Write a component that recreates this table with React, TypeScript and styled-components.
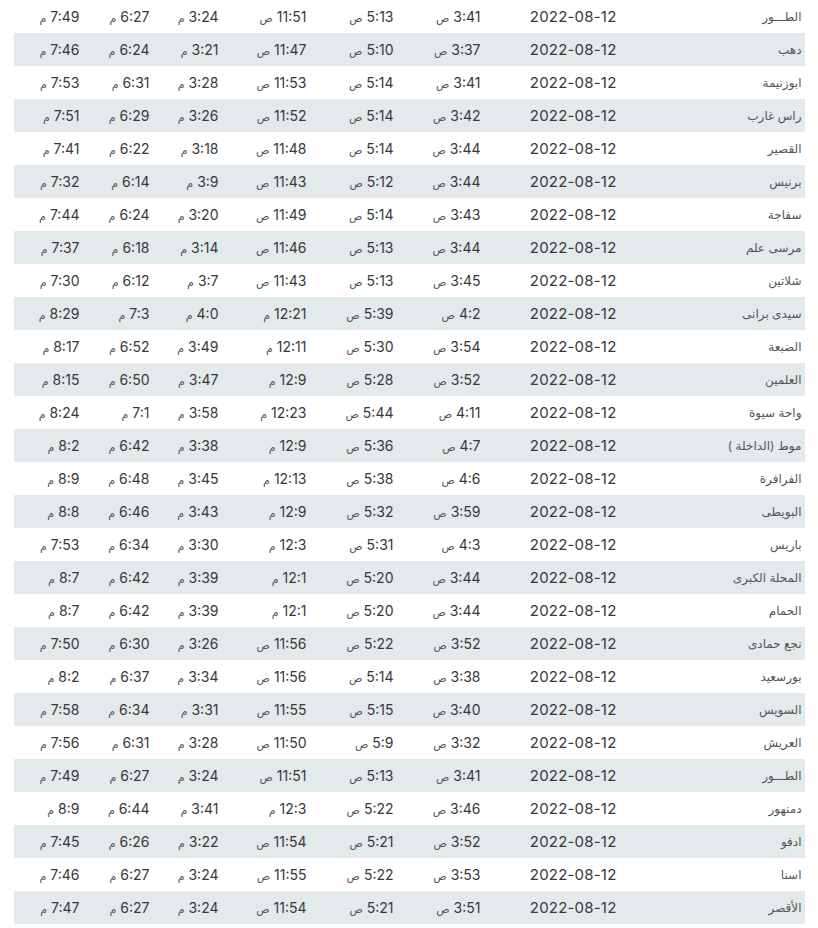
import { createGlobalStyle, styled } from "styled-components";

const GlobalStyle = createGlobalStyle`
  html, body {
    margin: 0;
    padding: 0;
    background: #ffffff;
  }
  body {
    font-family: "Inter", "DejaVu Sans", sans-serif;
    color: #383838;
  }
`;

type Row = [string, string, string, string, string, string, string];

const DATE = "2022-08-12";

const rows: Row[] = [
  ["الطـــور", "3:41 ص", "5:13 ص", "11:51 ص", "3:24 م", "6:27 م", "7:49 م"],
  ["دهب", "3:37 ص", "5:10 ص", "11:47 ص", "3:21 م", "6:24 م", "7:46 م"],
  ["ابوزنيمة", "3:41 ص", "5:14 ص", "11:53 ص", "3:28 م", "6:31 م", "7:53 م"],
  ["راس غارب", "3:42 ص", "5:14 ص", "11:52 ص", "3:26 م", "6:29 م", "7:51 م"],
  ["القصير", "3:44 ص", "5:14 ص", "11:48 ص", "3:18 م", "6:22 م", "7:41 م"],
  ["برنيس", "3:44 ص", "5:12 ص", "11:43 ص", "3:9 م", "6:14 م", "7:32 م"],
  ["سفاجة", "3:43 ص", "5:14 ص", "11:49 ص", "3:20 م", "6:24 م", "7:44 م"],
  ["مرسى علم", "3:44 ص", "5:13 ص", "11:46 ص", "3:14 م", "6:18 م", "7:37 م"],
  ["شلاتين", "3:45 ص", "5:13 ص", "11:43 ص", "3:7 م", "6:12 م", "7:30 م"],
  ["سيدى برانى", "4:2 ص", "5:39 ص", "12:21 م", "4:0 م", "7:3 م", "8:29 م"],
  ["الضبعة", "3:54 ص", "5:30 ص", "12:11 م", "3:49 م", "6:52 م", "8:17 م"],
  ["العلمين", "3:52 ص", "5:28 ص", "12:9 م", "3:47 م", "6:50 م", "8:15 م"],
  ["واحة سيوة", "4:11 ص", "5:44 ص", "12:23 م", "3:58 م", "7:1 م", "8:24 م"],
  ["موط (الداخلة )", "4:7 ص", "5:36 ص", "12:9 م", "3:38 م", "6:42 م", "8:2 م"],
  ["الفرافرة", "4:6 ص", "5:38 ص", "12:13 م", "3:45 م", "6:48 م", "8:9 م"],
  ["البويطى", "3:59 ص", "5:32 ص", "12:9 م", "3:43 م", "6:46 م", "8:8 م"],
  ["باريس", "4:3 ص", "5:31 ص", "12:3 م", "3:30 م", "6:34 م", "7:53 م"],
  ["المحلة الكبرى", "3:44 ص", "5:20 ص", "12:1 م", "3:39 م", "6:42 م", "8:7 م"],
  ["الحمام", "3:44 ص", "5:20 ص", "12:1 م", "3:39 م", "6:42 م", "8:7 م"],
  ["نجع حمادى", "3:52 ص", "5:22 ص", "11:56 ص", "3:26 م", "6:30 م", "7:50 م"],
  ["بورسعيد", "3:38 ص", "5:14 ص", "11:56 ص", "3:34 م", "6:37 م", "8:2 م"],
  ["السويس", "3:40 ص", "5:15 ص", "11:55 ص", "3:31 م", "6:34 م", "7:58 م"],
  ["العريش", "3:32 ص", "5:9 ص", "11:50 ص", "3:28 م", "6:31 م", "7:56 م"],
  ["الطـــور", "3:41 ص", "5:13 ص", "11:51 ص", "3:24 م", "6:27 م", "7:49 م"],
  ["دمنهور", "3:46 ص", "5:22 ص", "12:3 م", "3:41 م", "6:44 م", "8:9 م"],
  ["ادفو", "3:52 ص", "5:21 ص", "11:54 ص", "3:22 م", "6:26 م", "7:45 م"],
  ["اسنا", "3:53 ص", "5:22 ص", "11:55 ص", "3:24 م", "6:27 م", "7:46 م"],
  ["الأقصر", "3:51 ص", "5:21 ص", "11:54 ص", "3:24 م", "6:27 م", "7:47 م"],
];

// column widths, right to left: name, date, fajr, sunrise, dhuhr, asr, maghrib, isha
const widths = [185, 136, 87, 87, 88, 69, 70, 69];

const Table = styled.table`
  direction: rtl;
  width: 791px;
  margin: 0 auto;
  border-collapse: collapse;
  table-layout: fixed;
`;

const TableRow = styled.tr<{ $striped: boolean }>`
  height: 33px;
  background: ${(p) => (p.$striped ? "#e4e9eb" : "transparent")};
`;

const Cell = styled.td`
  padding: 0 3px 0 0;
  text-align: right;
  vertical-align: middle;
  font-size: 14px;
  white-space: nowrap;
  color: #383838;
`;

const NameCell = styled(Cell)`
  font-size: 12px;
  color: #555555;
`;

const DateCell = styled(Cell)`
  font-size: 15px;
  letter-spacing: 0.2px;
`;

const Suffix = styled.span`
  font-size: 11px;
  color: #555555;
  margin-right: 4px;
`;

const Time = ({ value }: { value: string }) => {
  const [num, suffix] = value.split(" ");
  return (
    <>
      <bdi>{num}</bdi>
      <Suffix>{suffix}</Suffix>
    </>
  );
};

export default function App() {
  return (
    <>
      <GlobalStyle />
      <Table>
        <colgroup>
          {widths.map((w, i) => (
            <col key={i} style={{ width: w }} />
          ))}
        </colgroup>
        <tbody>
          {rows.map(([name, ...times], i) => (
            <TableRow key={i} $striped={i % 2 === 1}>
              <NameCell>{name}</NameCell>
              <DateCell>{DATE}</DateCell>
              {times.map((t, j) => (
                <Cell key={j}>
                  <Time value={t} />
                </Cell>
              ))}
            </TableRow>
          ))}
        </tbody>
      </Table>
    </>
  );
}
